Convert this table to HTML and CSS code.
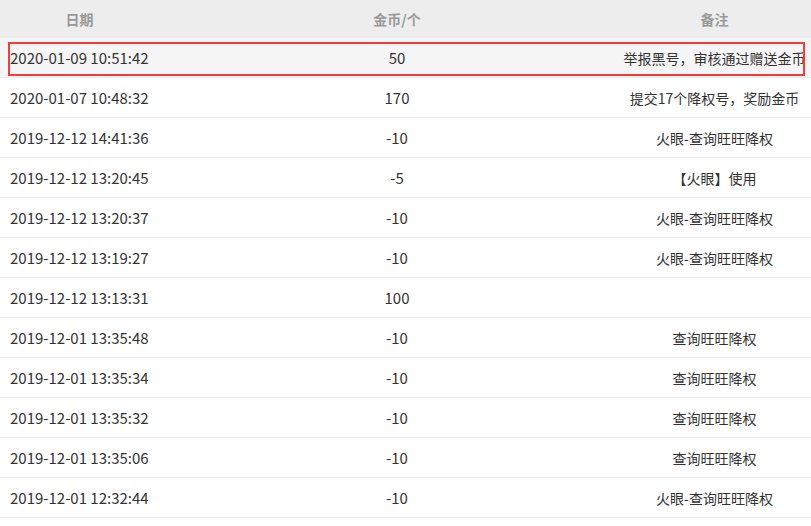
FILE: index.html
```html
<!DOCTYPE html>
<html lang="zh-CN">
<head>
<meta charset="utf-8">
<title>金币记录</title>
<link rel="stylesheet" href="styles.css">
</head>
<body>
<div class="table">
  <div class="row head">
    <div class="cell c-date">日期</div>
    <div class="cell c-num">金币/个</div>
    <div class="cell c-note">备注</div>
  </div>
  <div class="row active">
    <div class="cell c-date">2020-01-09 10:51:42</div>
    <div class="cell c-num">50</div>
    <div class="cell c-note">举报黑号，审核通过赠送金币</div>
    <div class="mark"></div>
  </div>
  <div class="row">
    <div class="cell c-date">2020-01-07 10:48:32</div>
    <div class="cell c-num">170</div>
    <div class="cell c-note">提交17个降权号，奖励金币</div>
  </div>
  <div class="row">
    <div class="cell c-date">2019-12-12 14:41:36</div>
    <div class="cell c-num">-10</div>
    <div class="cell c-note">火眼-查询旺旺降权</div>
  </div>
  <div class="row">
    <div class="cell c-date">2019-12-12 13:20:45</div>
    <div class="cell c-num">-5</div>
    <div class="cell c-note">【火眼】使用</div>
  </div>
  <div class="row">
    <div class="cell c-date">2019-12-12 13:20:37</div>
    <div class="cell c-num">-10</div>
    <div class="cell c-note">火眼-查询旺旺降权</div>
  </div>
  <div class="row">
    <div class="cell c-date">2019-12-12 13:19:27</div>
    <div class="cell c-num">-10</div>
    <div class="cell c-note">火眼-查询旺旺降权</div>
  </div>
  <div class="row">
    <div class="cell c-date">2019-12-12 13:13:31</div>
    <div class="cell c-num">100</div>
    <div class="cell c-note"></div>
  </div>
  <div class="row">
    <div class="cell c-date">2019-12-01 13:35:48</div>
    <div class="cell c-num">-10</div>
    <div class="cell c-note">查询旺旺降权</div>
  </div>
  <div class="row">
    <div class="cell c-date">2019-12-01 13:35:34</div>
    <div class="cell c-num">-10</div>
    <div class="cell c-note">查询旺旺降权</div>
  </div>
  <div class="row">
    <div class="cell c-date">2019-12-01 13:35:32</div>
    <div class="cell c-num">-10</div>
    <div class="cell c-note">查询旺旺降权</div>
  </div>
  <div class="row">
    <div class="cell c-date">2019-12-01 13:35:06</div>
    <div class="cell c-num">-10</div>
    <div class="cell c-note">查询旺旺降权</div>
  </div>
  <div class="row">
    <div class="cell c-date">2019-12-01 12:32:44</div>
    <div class="cell c-num">-10</div>
    <div class="cell c-note">火眼-查询旺旺降权</div>
  </div>
</div>
</body>
</html>
```
FILE: styles.css
```css
html, body {
  margin: 0;
  padding: 0;
  background: #fff;
}
body {
  font-family: "Noto Sans CJK SC", "Noto Sans", sans-serif;
  font-size: 14px;
  color: #333;
  overflow: hidden;
}
.table {
  width: 811px;
}
.row {
  position: relative;
  display: grid;
  grid-template-columns: 159px 476px 159px 1fr;
  height: 40px;
  box-sizing: border-box;
  border-bottom: 1px solid #eeeeee;
  align-items: center;
}
.row.head {
  height: 38px;
  background: #ededed;
  border-bottom: none;
  color: #999;
  font-weight: bold;
}
.row.head .cell {
  font-size: 14px;
}
.row.head .c-date {
  text-align: center;
  padding-left: 0;
}
.row.active {
  background: #f5f5f5;
}
.cell {
  white-space: nowrap;
  line-height: 20px;
}
.c-date {
  padding-left: 10px;
  text-align: left;
  font-size: 15px;
}
.c-num {
  text-align: center;
  font-size: 15px;
}
.c-note {
  display: flex;
  justify-content: center;
  overflow: visible;
}
.mark {
  position: absolute;
  left: 8px;
  top: 4px;
  width: 797px;
  height: 34px;
  box-sizing: border-box;
  border: 2px solid #f63b3b;
  pointer-events: none;
}
```
